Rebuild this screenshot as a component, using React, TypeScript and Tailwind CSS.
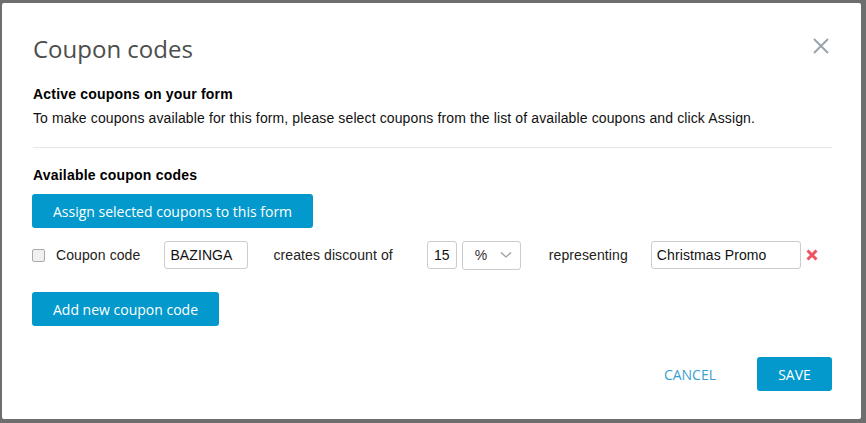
import React from "react";

export default function App() {
  const arial = { fontFamily: '"Liberation Sans", Arial, sans-serif' };
  return (
    <div className="w-[866px] h-[423px] bg-[#6e6e6e] pt-[3px] pl-[2px]">
      <div className="w-[859px] h-[416px] bg-white rounded-[2px] pl-[30px] pr-[31px] pt-[30px] relative" style={arial}>
        <div className="flex items-start justify-between">
          <h1 className="pl-[1px] text-[24px] leading-[32px] text-[#4d4d4d]" style={{ fontFamily: '"Open Sans", sans-serif' }}>Coupon codes</h1>
          <svg width="16" height="16" viewBox="0 0 16 16" className="mt-[5px] mr-[1px]">
            <path d="M1 1 L15 15 M15 1 L1 15" stroke="#9aa3ad" strokeWidth="2" />
          </svg>
        </div>
        <div className="pl-[1px] mt-[21px] text-[14px] leading-[16px] font-bold text-black tracking-[0.2px]">Active coupons on your form</div>
        <div className="pl-[1px] mt-[8px] text-[14px] leading-[16px] text-[#111] tracking-[0.12px]">To make coupons available for this form, please select coupons from the list of available coupons and click Assign.</div>
        <div className="mt-[21px] h-px bg-[#e6e6e6] w-[799px] ml-[1px]" />
        <div className="pl-[1px] mt-[19px] text-[14px] leading-[16px] font-bold text-black tracking-[0.2px]">Available coupon codes</div>
        <button className="mt-[11px] h-[34px] w-[281px] rounded-[3px] bg-[#0399cc] text-white text-[14px]" style={{ fontFamily: '"Open Sans", sans-serif' }}>Assign selected coupons to this form</button>
        <div className="flex items-center h-[28px] mt-[13px] text-[14px] text-[#222] tracking-[0.1px]">
          <div className="w-[13px] h-[13px] border border-[#aaa] rounded-[2px] bg-[#f0f0f0]" />
          <span className="ml-[11px]">Coupon code</span>
          <div className="ml-[24px] w-[84px] h-[28px] border border-[#ccc] rounded-[3px] flex items-center px-[5px] text-[#111]">BAZINGA</div>
          <span className="ml-[25px]">creates discount of</span>
          <div className="ml-[34px] w-[30px] h-[28px] border border-[#ccc] rounded-[3px] flex items-center justify-center text-[#111]">15</div>
          <div className="ml-[5px] w-[59px] h-[29px] border border-[#ccc] rounded-[3px] flex items-center pl-[12px] text-[#333]">
            <span>%</span>
            <svg width="12" height="8" viewBox="0 0 12 8" className="ml-[13px]">
              <path d="M1 1.5 L6 6 L11 1.5" stroke="#999" strokeWidth="1.2" fill="none" />
            </svg>
          </div>
          <span className="ml-[28px]">representing</span>
          <div className="ml-[23px] w-[150px] h-[28px] border border-[#ccc] rounded-[3px] flex items-center px-[5px] text-[#111]">Christmas Promo</div>
          <svg width="12" height="12" viewBox="0 0 12 12" className="ml-[5px]">
            <path d="M1.5 1.5 L10.5 10.5 M10.5 1.5 L1.5 10.5" stroke="#f0545f" strokeWidth="3" />
          </svg>
        </div>
        <button className="mt-[23px] h-[34px] w-[187px] rounded-[3px] bg-[#0399cc] text-white text-[14px]" style={{ fontFamily: '"Open Sans", sans-serif' }}>Add new coupon code</button>
        <div className="flex justify-end items-center mt-[31px] mr-[-2px]" style={{ fontFamily: '"Open Sans", sans-serif' }}>
          <span className="text-[14px] text-[#3b9fd1] mr-[41px]">CANCEL</span>
          <button className="h-[34px] w-[75px] rounded-[3px] bg-[#0399cc] text-white text-[14px]">SAVE</button>
        </div>
      </div>
    </div>
  );
}
